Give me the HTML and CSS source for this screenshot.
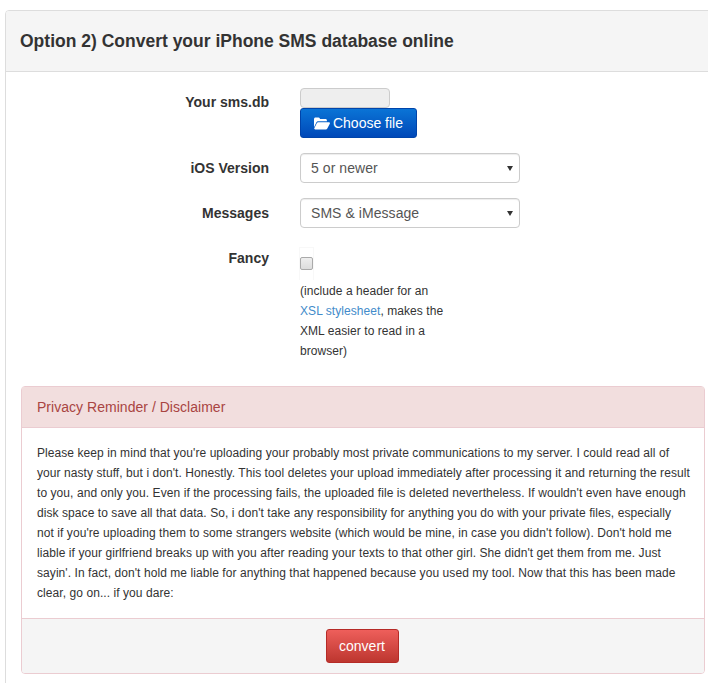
FILE: index.html
```html
<!DOCTYPE html>
<html lang="en">
<head>
<meta charset="utf-8">
<title>Convert your iPhone SMS database</title>
<link rel="stylesheet" href="styles.css">
</head>
<body>
<section class="panel">
  <header class="panel-heading"><h2>Option 2) Convert your iPhone SMS database online</h2></header>
  <form class="panel-body">
    <div class="row row-file">
      <label class="label">Your sms.db</label>
      <div class="field">
        <div class="file-preview"></div>
        <button type="button" class="btn btn-blue">
          <svg class="folder" viewBox="0 0 16 13" width="16" height="13" aria-hidden="true"><path d="M0 2.200C0 1.300.7.600 1.500.600h3c.7 0 1 .3 1.300.8l.3.5h5.400c.8 0 1.400.6 1.400 1.400v1H4.400c-1 0-1.700.5-2.100 1.300L0 10.200z"/><path d="M4.300 5.300H15c.8 0 1.200.7.8 1.400l-2.500 4.900c-.3.600-.8.900-1.500.9H1.200c-.8 0-1.200-.7-.9-1.300l2.500-5c.3-.6.800-.9 1.500-.9z"/></svg>
          <span>Choose file</span>
        </button>
      </div>
    </div>
    <div class="row row-select">
      <label class="label">iOS Version</label>
      <div class="field"><div class="select">5 or newer<span class="caret"></span></div></div>
    </div>
    <div class="row row-select">
      <label class="label">Messages</label>
      <div class="field"><div class="select">SMS &amp; iMessage<span class="caret"></span></div></div>
    </div>
    <div class="row row-fancy">
      <label class="label">Fancy</label>
      <div class="field">
        <div class="check-wrap"><span class="check"></span></div>
        <p class="help">(include a header for an <a href="#">XSL stylesheet</a>, makes the XML easier to read in a browser)</p>
      </div>
    </div>
    <div class="danger">
      <div class="danger-heading">Privacy Reminder / Disclaimer</div>
      <div class="danger-body">
        <span class="line">Please keep in mind that you're uploading your probably most private communications to my server. I could read all of</span>
        <span class="line">your nasty stuff, but i don't. Honestly. This tool deletes your upload immediately after processing it and returning the result</span>
        <span class="line">to you, and only you. Even if the processing fails, the uploaded file is deleted nevertheless. If wouldn't even have enough</span>
        <span class="line">disk space to save all that data. So, i don't take any responsibility for anything you do with your private files, especially</span>
        <span class="line">not if you're uploading them to some strangers website (which would be mine, in case you didn't follow). Don't hold me</span>
        <span class="line">liable if your girlfriend breaks up with you after reading your texts to that other girl. She didn't get them from me. Just</span>
        <span class="line">sayin'. In fact, don't hold me liable for anything that happened because you used my tool. Now that this has been made</span>
        <span class="line">clear, go on... if you dare:</span>
      </div>
      <div class="danger-footer"><button type="button" class="btn btn-red">convert</button></div>
    </div>
  </form>
</section>
</body>
</html>
```
FILE: styles.css
```css
html, body { margin: 0; padding: 0; height: 683px; overflow: hidden; background: #fff; }
body { font-family: "Liberation Sans", Arial, sans-serif; color: #333; font-size: 12px; line-height: 20px; padding: 10px 0 0 5px; box-sizing: border-box; }
.panel { width: 720px; box-sizing: border-box; border: 1px solid #ddd; border-radius: 4px; background: #fff; }
.panel-heading { height: 60px; background: #f5f5f5; border-bottom: 1px solid #ddd; padding: 0 14px; display: flex; align-items: center; border-radius: 3px 3px 0 0; }
.panel-heading h2 { margin: 0; font-size: 17.5px; font-weight: 700; line-height: 20px; color: #333; }
.panel-body { padding: 16px 15px 15px; display: block; }
.row { display: flex; }
.label { width: 248px; margin-right: 31px; text-align: right; font-size: 14px; font-weight: 700; line-height: 20px; flex: none; }
.row-file { height: 65px; }
.row-file .label { padding-top: 4px; }
.row-select { height: 45px; }
.row-select .label { padding-top: 5px; }
.file-preview { width: 90px; height: 20px; box-sizing: border-box; background: #eee; border: 1px solid #ccc; border-radius: 4px; }
.btn { display: flex; align-items: center; justify-content: center; font-family: inherit; font-size: 14px; color: #fff; border-radius: 3px; cursor: pointer; line-height: 20px; }
.btn-blue { width: 117px; height: 30px; border: 1px solid #0044aa; background: linear-gradient(#0a74d6, #0048b8); gap: 3px; padding: 0; }
.folder { fill: #fff; }
.select { position: relative; width: 220px; height: 30px; box-sizing: border-box; border: 1px solid #ccc; border-radius: 4px; padding: 4px 10px; font-size: 14px; line-height: 20px; color: #555; background: #fff; box-shadow: inset 0 1px 1px rgba(0,0,0,.075); letter-spacing: .06px; }
.caret { position: absolute; right: 6px; top: 12px; width: 0; height: 0; border-left: 3px solid transparent; border-right: 3px solid transparent; border-top: 5px solid #333; }
.row-fancy { padding-top: 4px; }
.row-fancy .label { padding-top: 1px; }
.check-wrap { width: 13px; height: 31px; padding-bottom: 1px; display: flex; align-items: center; border: 1px solid #f8f8f8; border-bottom: 0; margin-left: -1px; }
.check { display: block; width: 13px; height: 13px; box-sizing: border-box; border: 1px solid #aaa; border-radius: 2px; background: linear-gradient(#eee, #ddd); flex: none; }
.help { margin: 1px 0 0; width: 150px; letter-spacing: .06px; }
.help a { color: #428bca; text-decoration: none; }
.danger { width: 684px; box-sizing: border-box; margin-top: 25px; border: 1px solid #ebccd1; border-radius: 4px; }
.danger-heading { height: 41px; box-sizing: border-box; padding: 10px 15px; background: #f2dede; border-bottom: 1px solid #ebccd1; color: #a94442; font-size: 14px; line-height: 20px; letter-spacing: .03px; }
.danger-body { padding: 15px; height: 190px; box-sizing: border-box; letter-spacing: .07px; }
.line { display: block; white-space: nowrap; }
.danger-footer { height: 55px; box-sizing: border-box; background: #f5f5f5; border-top: 1px solid #ebccd1; display: flex; justify-content: center; padding: 10px 2px 0 0; border-radius: 0 0 3px 3px; }
.btn-red { width: 73px; height: 34px; border: 1px solid #b52b27; background: linear-gradient(#ee5f5b, #bd362f); padding: 0; }
```
